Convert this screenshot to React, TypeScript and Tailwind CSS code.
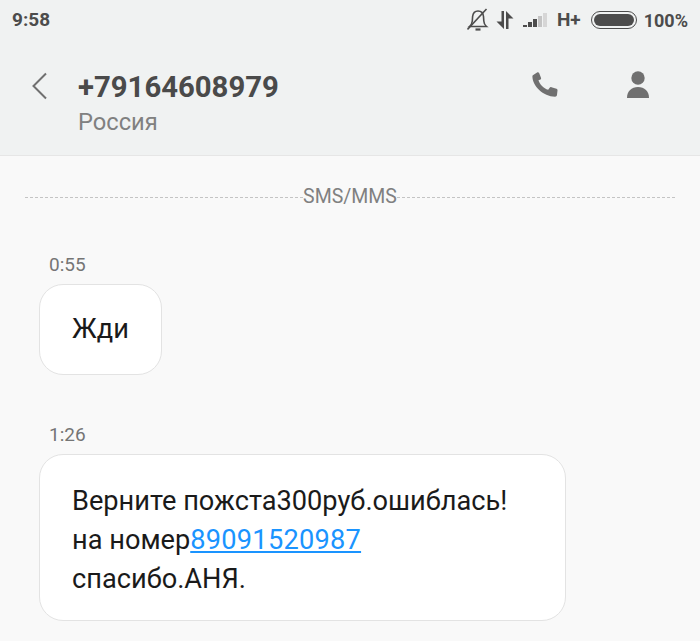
export default function App() {
  return (
    <div className="h-[641px] w-[700px] overflow-hidden bg-[#f9f9f9] font-['Roboto',sans-serif]">
      {/* Status bar + title */}
      <header className="h-[156px] border-b border-[#e6e6e6] bg-[#f0f2f2]">
        <div className="flex h-[40px] items-center justify-between pl-[12px] pr-[12px] text-[#4c4c4c]">
          <span className="text-[19px] font-bold">9:58</span>
          <div className="flex items-center">
            <svg width="22" height="24" viewBox="0 0 22 24" fill="none" stroke="#4c4c4c" strokeWidth="1.6" className="mr-[7px]">
              <path d="M2.500 18.500h17c-1.800-1.500-2.600-3-2.700-5.500l-.3-4.500C16.200 5.200 14 3 11 3S6 5.200 5.600 8.500L5.300 13c-.2 2.500-1 4-2.800 5.500z" />
              <path d="M8.500 21.500h5" strokeWidth="2.200" />
              <path d="M.5 21.500 19.500 1" />
            </svg>
            <svg width="18" height="22" viewBox="0 0 18 22" fill="#4c4c4c" className="mr-[9px]">
              <path d="M5.500 2h2.500v18L.5 12.500h5z" />
              <path d="M10 2v18h2.500V9.500h5z" />
            </svg>
            <svg width="25" height="16" viewBox="0 0 25 16" className="mr-[9px]">
              <path d="M0 15h4v-2H0z" fill="#4c4c4c" />
              <path d="M5 15h4v-5H5z" fill="#4c4c4c" />
              <path d="M10 15h4V7h-4z" fill="#4c4c4c" />
              <path d="M15 15h4V4h-4z" fill="#c4c4c4" />
              <path d="M20 15h4V1h-4z" fill="#d6d6d6" />
            </svg>
            <span className="mr-[10px] text-[19px] font-bold">H+</span>
            <div className="mr-[7px] h-[18px] w-[46px] rounded-full border border-[#4c4c4c] p-[2px]">
              <div className="h-full w-full rounded-full bg-[#4c4c4c]" />
            </div>
            <span className="text-[18px] font-bold">100%</span>
          </div>
        </div>
        <div className="flex h-[116px] items-start">
          <svg width="18" height="28" viewBox="0 0 18 28" fill="none" stroke="#707070" strokeWidth="2" className="ml-[31px] mr-[29px] mt-[32px]">
            <path d="M15 1.500 2.500 14 15 26.500" />
          </svg>
          <div className="mt-[28px] flex-1">
            <div className="text-[29.300px] font-bold leading-[38px] text-[#4a4a4a]">+79164608979</div>
            <div className="text-[23.700px] leading-[32px] text-[#808080]">Россия</div>
          </div>
          <svg width="28" height="28" viewBox="0 0 30 30" fill="#707070" className="mr-[67px] mt-[31px]">
            <path d="M2 4.500 6.500 1.500c1-.5 1.700-.2 2.200.7l2 5c.3.800.1 1.400-.5 1.900L8 9.800c1.300 4.300 5.500 8.700 10.400 10.400l1.600-2.300c.5-.6 1.100-.8 1.900-.5l5.400 1.700c.9.400 1.200 1 1.100 1.900l-.6 5c-.2 1-.9 1.500-2 1.500C13 27.200 1.500 16 1.500 5.500c0-.4.200-.8.500-1z" />
          </svg>
          <svg width="24" height="28" viewBox="0 0 24 28" fill="#707070" className="mr-[50px] mt-[31px]">
            <circle cx="12" cy="7" r="6.700" />
            <path d="M1 27c0-7 4.500-11 11-11s11 4 11 11z" />
          </svg>
        </div>
      </header>

      {/* Messages */}
      <main className="px-[25px]">
        <div className="mt-[31px] flex items-center">
          <div className="flex-1 border-t border-dashed border-[#c4c4c4]" />
          <span className="text-[19.500px] leading-[20px] text-[#808080]">SMS/MMS</span>
          <div className="flex-1 border-t border-dashed border-[#c4c4c4]" />
        </div>
        <div className="mt-[48px] pl-[24px] text-[19px] leading-[20px] text-[#757575]">0:55</div>
        <div className="ml-[14px] mt-[9px] flex h-[91px] w-[123px] items-center justify-center rounded-[24px] border border-[#e3e3e3] bg-white text-[27.200px] text-[#1a1a1a]">
          Жди
        </div>
        <div className="mt-[50px] pl-[24px] text-[19px] leading-[20px] text-[#757575]">1:26</div>
        <div className="ml-[14px] mt-[9px] h-[167px] w-[527px] rounded-[24px] border border-[#e3e3e3] bg-white pl-[32px] pt-[27px] text-[27.200px] leading-[39px] text-[#1a1a1a]">
          <div>Верните пожста300руб.ошиблась!</div>
          <div>
            на номер<span className="tracking-[0.25px] text-[#1a94ff] underline">89091520987</span>
          </div>
          <div>спасибо.АНЯ.</div>
        </div>
      </main>
    </div>
  )
}
